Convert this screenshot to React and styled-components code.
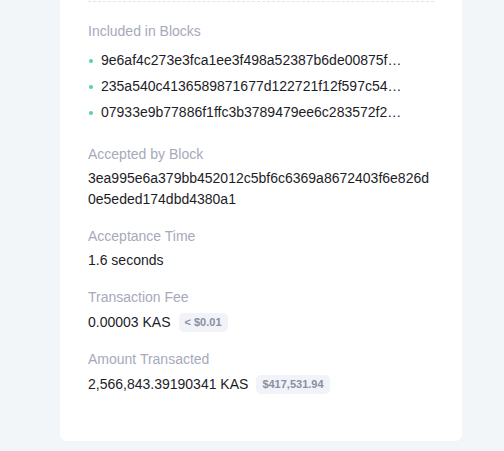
import React from "react";
import styled, { createGlobalStyle } from "styled-components";

const GlobalStyle = createGlobalStyle`
  html, body {
    margin: 0;
    padding: 0;
    background: #f3f6f9;
  }
  body {
    font-family: "Liberation Sans", Arial, sans-serif;
  }
`;

const Page = styled.div`
  padding: 0 42px 12px 60px;
`;

const Card = styled.section`
  background: #ffffff;
  border-radius: 0 0 7px 7px;
  padding: 1px 28px 46px;
  display: flex;
  flex-direction: column;
`;

const Divider = styled.div`
  border-top: 1px dashed #e1e4ea;
  margin-bottom: 19px;
`;

const Section = styled.div`
  display: flex;
  flex-direction: column;
  gap: ${(p) => (p.$list ? "8px" : "3px")};
  margin-bottom: ${(p) => (p.$list ? "21px" : "16px")};
  &:last-child {
    margin-bottom: 0;
  }
`;

const Label = styled.div`
  font-size: 14px;
  line-height: 21px;
  color: #a6a9ba;
`;

const Value = styled.div`
  font-size: 14px;
  line-height: 21px;
  color: #1d1d27;
  word-break: break-all;
  display: flex;
  align-items: center;
  flex-wrap: wrap;
  gap: 8px;
  margin-top: ${(p) => (p.$badge ? "1px" : "0")};
`;

const HashList = styled.ul`
  list-style: none;
  margin: 0;
  padding: 0;
  display: flex;
  flex-direction: column;
  gap: 5px;
`;

const HashItem = styled.li`
  display: flex;
  align-items: center;
  gap: 8px;
  font-size: 14px;
  line-height: 21px;
  color: #1d1d27;
  &::before {
    content: "";
    width: 4px;
    height: 4px;
    border-radius: 50%;
    background: #5ccdb0;
    margin-left: 1px;
    flex-shrink: 0;
  }
`;

const HashText = styled.span`
  max-width: 304px;
  overflow: hidden;
  white-space: nowrap;
  text-overflow: ellipsis;
`;

const Badge = styled.span`
  display: inline-block;
  background: #f1f3f8;
  color: #8a8fa1;
  font-size: 11px;
  font-weight: 700;
  line-height: 19px;
  padding: 0 6px;
  border-radius: 5px;
`;

const blocks = [
  "9e6af4c273e3fca1ee3f498a52387b6de00875f8c3a1b2e4d5f6a7b8c9d0e1f2",
  "235a540c4136589871677d122721f12f597c54a8b9c0d1e2f3a4b5c6d7e8f9a0",
  "07933e9b77886f1ffc3b3789479ee6c283572f2a1b2c3d4e5f6a7b8c9d0e1f2a",
];

export default function App() {
  return (
    <Page>
      <GlobalStyle />
      <Card>
        <Divider />
        <Section $list>
          <Label>Included in Blocks</Label>
          <HashList>
            {blocks.map((b) => (
              <HashItem key={b} title={b}>
                <HashText>{b}</HashText>
              </HashItem>
            ))}
          </HashList>
        </Section>
        <Section>
          <Label>Accepted by Block</Label>
          <Value>3ea995e6a379bb452012c5bf6c6369a8672403f6e826d0e5eded174dbd4380a1</Value>
        </Section>
        <Section>
          <Label>Acceptance Time</Label>
          <Value>1.6 seconds</Value>
        </Section>
        <Section>
          <Label>Transaction Fee</Label>
          <Value $badge>
            0.00003 KAS <Badge>&lt; $0.01</Badge>
          </Value>
        </Section>
        <Section>
          <Label>Amount Transacted</Label>
          <Value $badge>
            2,566,843.39190341 KAS <Badge>$417,531.94</Badge>
          </Value>
        </Section>
      </Card>
    </Page>
  );
}
